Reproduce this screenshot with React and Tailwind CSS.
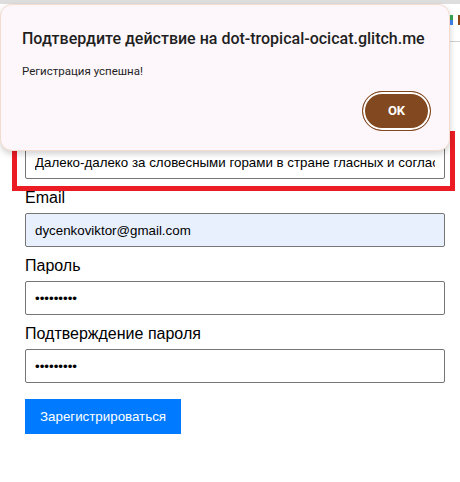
import React from 'react';

const Field = ({ label, type = "text", value, autofill }) => (
    <div className="flex flex-col">
        <label className="mt-2.5 mb-1.5 text-base leading-[18px] text-black">{label}</label>
        <input
            readOnly
            type={type}
            value={value}
            className={`w-[420px] h-[34px] px-[9px] border border-[#767676] rounded-[2px] text-[13.33px] text-black outline-none ${autofill ? "bg-[#e8f0fe]" : "bg-white"}`}
        />
    </div>
);

const App = () => {
    return (
        <div className="relative w-[460px] h-[482px] overflow-hidden bg-white font-['Liberation_Sans',Arial,sans-serif]">
            {/* browser strip */}
            <div className="h-1 bg-[#dedede]" />
            <div className="h-[38px] border-b border-[#d0d0d0] flex items-center justify-end">
                <div className="flex items-center gap-[5px] mb-1.5">
                    <div className="w-[3px] h-[10px] flex flex-col">
                        <div className="flex-1 bg-[#34a853]" />
                        <div className="flex-1 bg-[#4285f4]" />
                    </div>
                    <div className="w-[2px] h-[10px] bg-[#8b4513]" />
                </div>
            </div>

            {/* form */}
            <form className="pl-[25px] pt-[69px] flex flex-col">
                <Field label="Имя пользователя" value="Далеко-далеко за словесными горами в стране гласных и согласных живут рыбные тексты" />
                <Field label="Email" value="dycenkoviktor@gmail.com" autofill />
                <Field label="Пароль" type="password" value="123456789" />
                <Field label="Подтверждение пароля" type="password" value="123456789" />
                <button type="button" className="mt-4 self-start h-[35px] px-[15px] bg-[#007bff] text-white text-[13.33px]">
                    Зарегистрироваться
                </button>
            </form>

            {/* red annotation */}
            <div className="absolute left-[12px] top-[131px] w-[443px] h-[60px] border-[5px] border-[#ec1c24]" />

            {/* alert dialog */}
            <div className="absolute left-0 top-1 w-[450px] h-[147px] rounded-xl bg-[#fdf7fb] border border-[#f3dccd] shadow-[0_3px_6px_rgba(0,0,0,0.18)] font-['Roboto',sans-serif] flex flex-col">
                <h2 className="pl-[21px] pt-[23px] text-[16px] leading-[22px] font-medium text-[#1f1f1f] whitespace-nowrap">
                    Подтвердите действие на dot-tropical-ocicat.glitch.me
                </h2>
                <p className="pl-[21px] mt-[13px] text-[11.5px] leading-[16px] text-[#1f1f1f]">Регистрация успешна!</p>
                <div className="flex justify-end pr-[18px] mt-[12px]">
                    <button type="button" className="w-[69px] h-[40px] rounded-full bg-[#82481f] border border-[#82481f] shadow-[inset_0_0_0_2px_white] text-white text-[13px] font-bold">
                        OK
                    </button>
                </div>
            </div>
        </div>
    );
};

export default App;
